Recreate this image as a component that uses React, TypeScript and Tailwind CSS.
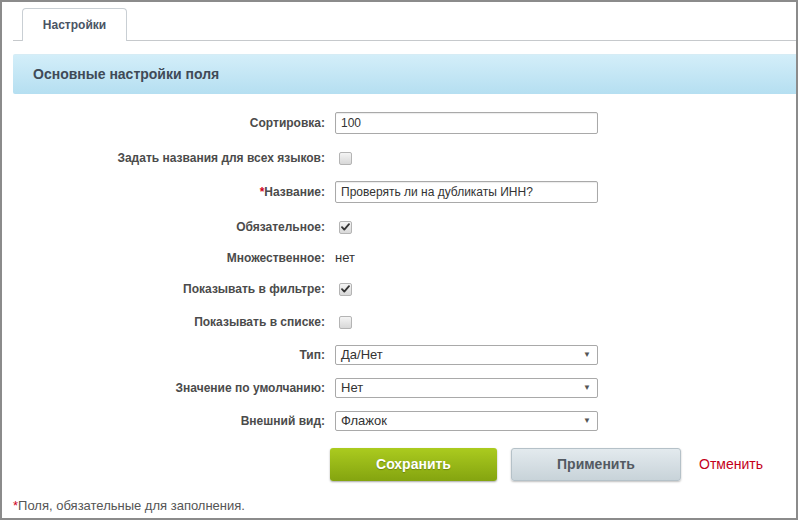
import React from 'react';

const font = { fontFamily: '"Liberation Sans", Arial, sans-serif' };

const Checkbox: React.FC<{ checked?: boolean }> = ({ checked }) => (
  <span className="ml-[4px] flex h-[13px] w-[13px] items-center justify-center rounded-[2px] border border-[#b4b4b4] bg-gradient-to-b from-[#f4f4f4] to-[#d8d8d8]">
    {checked && (
      <svg width="9" height="8" viewBox="0 0 9 8">
        <path d="M1 4.2 L3.3 6.6 L8 1.2" fill="none" stroke="#333" strokeWidth="1.8" strokeLinecap="round" strokeLinejoin="round" />
      </svg>
    )}
  </span>
);

const TextInput: React.FC<{ value: string }> = ({ value }) => (
  <div className="flex h-[22px] w-[263px] items-center rounded-[2px] border border-[#a9a9a9] bg-white pl-[5px] text-[12px] text-[#333] shadow-[inset_0_1px_1px_rgba(0,0,0,0.08)]">
    {value}
  </div>
);

const Select: React.FC<{ value: string }> = ({ value }) => (
  <div className="flex h-[20px] w-[263px] items-center justify-between rounded-[2px] border border-[#a9a9a9] bg-white pl-[5px] pr-[6px] text-[13px] text-[#333]">
    <span>{value}</span>
    <span className="text-[8px] text-[#555]">▼</span>
  </div>
);

const Row: React.FC<{ label: React.ReactNode; children: React.ReactNode; mt: string }> = ({ label, children, mt }) => (
  <div className={`flex h-[22px] items-center ${mt}`}>
    <div className="w-[312px] text-right text-[12px] font-bold text-[#4b4b4b]">{label}</div>
    <div className="ml-[10px] flex items-center">{children}</div>
  </div>
);

const App: React.FC = () => {
  return (
    <div className="h-[520px] w-[798px] border-2 border-[#8b8b8b] bg-white" style={font}>
      <div className="pl-[11px] pt-[6px]">
        <div className="flex border-b border-[#c6c9cc]">
          <div className="-mb-px ml-[9px] flex h-[33px] w-[105px] items-center justify-center rounded-t-[4px] border border-b-0 border-[#c9cfd4] bg-white text-[12px] font-bold text-[#4a5464]">
            Настройки
          </div>
        </div>
      </div>

      <div className="ml-[11px] mt-[13px] flex h-[40px] items-center rounded-l-[2px] border-t border-[#d6ecf5] bg-gradient-to-b from-[#d3eef9] to-[#b5dff1] pl-[20px] text-[14px] font-bold text-[#3f4a57]">
        Основные настройки поля
      </div>

      <div className="pl-[11px]">
        <Row label="Сортировка:" mt="mt-[18px]">
          <TextInput value="100" />
        </Row>
        <Row label="Задать названия для всех языков:" mt="mt-[13px]">
          <Checkbox />
        </Row>
        <Row label={<><span className="text-[#d0021b]">*</span>Название:</>} mt="mt-[12px]">
          <TextInput value="Проверять ли на дубликаты ИНН?" />
        </Row>
        <Row label="Обязательное:" mt="mt-[13px]">
          <Checkbox checked />
        </Row>
        <Row label="Множественное:" mt="mt-[9px]">
          <span className="text-[13px] text-[#333]">нет</span>
        </Row>
        <Row label="Показывать в фильтре:" mt="mt-[9px]">
          <Checkbox checked />
        </Row>
        <Row label="Показывать в списке:" mt="mt-[11px]">
          <Checkbox />
        </Row>
        <Row label="Тип:" mt="mt-[11px]">
          <Select value="Да/Нет" />
        </Row>
        <Row label="Значение по умолчанию:" mt="mt-[11px]">
          <Select value="Нет" />
        </Row>
        <Row label="Внешний вид:" mt="mt-[11px]">
          <Select value="Флажок" />
        </Row>

        <div className="ml-[317px] mt-[16px] flex items-center">
          <button className="flex h-[33px] w-[167px] items-center justify-center rounded-[3px] bg-gradient-to-b from-[#abcb1f] to-[#84a40f] text-[14px] font-bold text-white shadow-[0_1px_2px_rgba(0,0,0,0.35)] [text-shadow:0_1px_1px_rgba(0,0,0,0.25)]">
            Сохранить
          </button>
          <button className="ml-[14px] flex h-[33px] w-[170px] items-center justify-center rounded-[3px] border border-[#b5c1c8] bg-gradient-to-b from-[#e3eaee] to-[#c8d3d9] text-[14px] font-bold text-[#535a62] shadow-[0_1px_2px_rgba(0,0,0,0.25)]">
            Применить
          </button>
          <span className="ml-[18px] text-[14px] text-[#c4001b]">Отменить</span>
        </div>

        <div className="mt-[15px] text-[13px] text-[#555]">
          <span className="text-[#d0021b]">*</span>Поля, обязательные для заполнения.
        </div>
      </div>
    </div>
  );
};

export default App;
